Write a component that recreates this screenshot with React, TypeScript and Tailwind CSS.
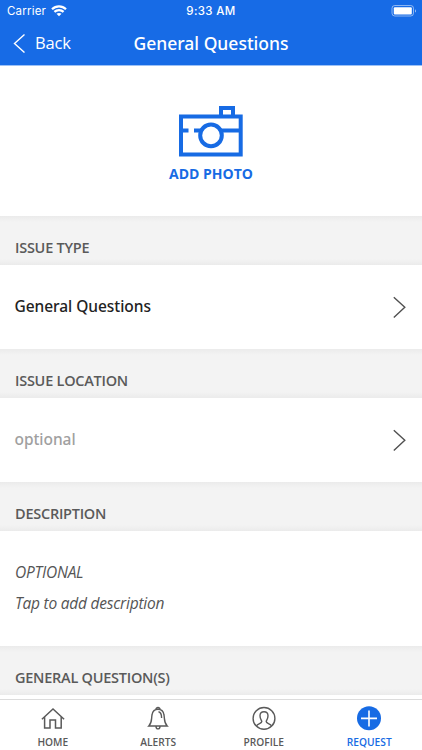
import React from "react";

function StatusBar() {
  return (
    <div className="grid h-[22px] grid-cols-3 items-center px-[7px] font-['Inter',sans-serif] text-[11.5px] leading-[22px] text-white">
      <div className="flex items-center gap-[5px]">
        <span className="tracking-[0.2px]">Carrier</span>
        <svg width="16" height="12" viewBox="0 0 16 12" fill="none" stroke="white" strokeWidth="2.2">
          <path d="M1 4.2C5 .3 11 .3 15 4.2M3.4 6.9C6 4.4 10 4.4 12.6 6.9" />
          <path d="M8 11.3 5.5 8.8C7 7.6 9 7.6 10.5 8.8Z" fill="white" stroke="none" />
        </svg>
      </div>
      <span className="text-center font-medium tracking-[0.35px]">9:33 AM</span>
      <svg className="-mr-[2px] justify-self-end" width="26" height="12" viewBox="0 0 26 12">
        <rect x="1" y="0.5" width="21.5" height="10.5" rx="2.8" fill="none" stroke="white" strokeOpacity=".5" />
        <rect x="2.8" y="2.2" width="18" height="7.2" rx="1" fill="white" />
        <path d="M24 4.2v3.4c1.3-.5 1.3-2.9 0-3.4Z" fill="white" fillOpacity=".6" />
      </svg>
    </div>
  );
}

function Chevron() {
  return (
    <svg width="14" height="22" viewBox="0 0 14 22" fill="none" stroke="#505050" strokeWidth="1.4">
      <path d="M1.8 1.2 12.8 11.3 1.8 21.4" />
    </svg>
  );
}

function SectionTitle({ children }: { children: React.ReactNode }) {
  return (
    <h2 className="flex h-[49px] shrink-0 items-end bg-[linear-gradient(#ebebeb,#f3f3f3_6px,#f3f3f3_43px,#ebebeb)] px-[15px] pb-[7px] text-[14.5px] leading-[20px] font-semibold tracking-[-0.25px] text-[#5a5a5a]">
      {children}
    </h2>
  );
}

function Tab({ label, active, children }: { label: string; active?: boolean; children: React.ReactNode }) {
  return (
    <a className={`flex flex-1 flex-col items-center pt-[6px] text-[10.2px] font-semibold ${active ? "text-[#176be4]" : "text-[#5a5a5a]"}`}>
      {children}
      <span className="mt-[5px] leading-[14px]">{label}</span>
    </a>
  );
}

export default function App() {
  return (
    <div className="flex h-[750px] w-[422px] flex-col overflow-hidden bg-white font-['Open_Sans','Noto_Sans',sans-serif]">
      <header className="h-[66px] shrink-0 border-b border-[#9cc1f6] bg-[#176be6] text-white">
        <StatusBar />
        <div className="grid h-[42px] grid-cols-[1fr_auto_1fr] items-center">
          <div className="flex items-center gap-[9px] pl-[13px] text-[16.5px] tracking-[-0.2px]">
            <svg width="13" height="20" viewBox="0 0 13 20" fill="none" stroke="white" strokeWidth="1.4">
              <path d="M11.5 1.5 1.5 10.5 11.5 19.5" />
            </svg>
            <span>Back</span>
          </div>
          <h1 className="font-['Noto_Sans',sans-serif] text-[17.5px] font-medium">General Questions</h1>
        </div>
      </header>

      <button className="flex h-[150px] shrink-0 flex-col items-center pt-[38px] text-[#176be4]">
        <svg width="66" height="54" viewBox="0 0 66 54" fill="none" stroke="currentColor" strokeWidth="4">
          <path d="M3 12.5H62.7V50.6H3ZM43 12V4H55V12M3 26.6H10.5M16 26.6H23M43 26.6H63" />
          <circle cx="33" cy="31.4" r="10.8" />
        </svg>
        <span className="mt-[6px] text-[14px] leading-[20px] font-bold">ADD PHOTO</span>
      </button>

      <SectionTitle>ISSUE TYPE</SectionTitle>
      <div className="flex h-[84px] shrink-0 items-center justify-between pr-[16px] pl-[14.5px] font-['Noto_Sans',sans-serif] text-[15.5px] font-medium tracking-[-0.05px] text-[#222]">
        <span className="-mt-[1px]">General Questions</span>
        <Chevron />
      </div>
      <SectionTitle>ISSUE LOCATION</SectionTitle>
      <div className="flex h-[84px] shrink-0 items-center justify-between pr-[16px] pl-[14.5px] font-['Noto_Sans',sans-serif] text-[15.5px] font-medium tracking-[-0.05px] text-[#a0a0a0]">
        <span className="-mt-[1px]">optional</span>
        <Chevron />
      </div>
      <SectionTitle>DESCRIPTION</SectionTitle>
      <div className="h-[115px] shrink-0 px-[15px] pt-[26px] text-[15.5px] leading-[30.5px] tracking-[-0.22px] text-[#555] italic">
        <p>OPTIONAL</p>
        <p>Tap to add description</p>
      </div>
      <SectionTitle>GENERAL QUESTION(S)</SectionTitle>
      <div className="h-[4px] shrink-0" />

      <nav className="flex h-[51px] shrink-0 border-t border-[#dcdcdc] bg-white">
        <Tab label="HOME">
          <svg width="24" height="24" viewBox="0 0 24 24" fill="none" stroke="currentColor" strokeWidth="1.5">
            <path d="M.9 13.2 12 3 23.1 13.2M3.6 11V22H9V14H14.5V22H20.2V11" />
          </svg>
        </Tab>
        <Tab label="ALERTS">
          <svg width="24" height="24" viewBox="0 0 24 24" fill="none" stroke="currentColor" strokeWidth="1.4">
            <path d="M2.8 20C6.3 16.5 5.2 13 6 9 6.6 5.3 9 3.3 12 3.3S17.4 5.3 18 9C18.8 13 17.7 16.5 21.2 20ZM10 3.3C9.8.9 14.2.9 14 3.3M10 20.2C10 23.8 14 23.8 14 20.2M12.5 5.8C15 6.3 15.6 8.5 15.6 12" />
          </svg>
        </Tab>
        <Tab label="PROFILE">
          <svg width="24" height="24" viewBox="0 0 24 24" fill="none" stroke="currentColor" strokeWidth="1.4">
            <circle cx="12" cy="12.4" r="10.9" />
            <path d="M4.5 19.9C5.5 17.4 9.8 17.6 9.8 15.6 9.8 14.4 8 13.2 8 9.7 8 7.2 9.6 5.7 12 5.7S16 7.2 16 9.7C16 13.2 14.2 14.4 14.2 15.6 14.2 17.6 18.5 17.4 19.5 19.9" />
          </svg>
        </Tab>
        <Tab label="REQUEST" active>
          <svg width="24" height="25" viewBox="0 0 24 25" className="-mb-px">
            <circle cx="12" cy="12.3" r="12" fill="currentColor" />
            <path d="M4 12.4H20M12 4.4V20.4" stroke="white" strokeWidth="1.6" />
          </svg>
        </Tab>
      </nav>
    </div>
  );
}
